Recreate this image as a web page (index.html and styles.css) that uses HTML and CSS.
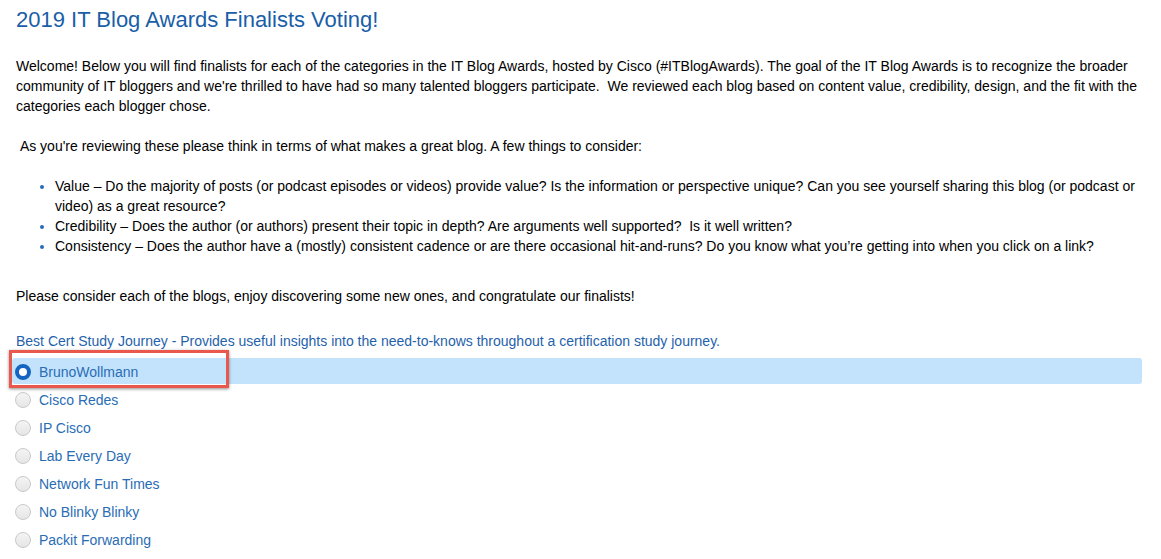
FILE: index.html
```html
<!DOCTYPE html>
<html>
<head>
<meta charset="utf-8">
<link rel="stylesheet" href="styles.css">
</head>
<body>
<div class="page">
  <h1 class="title">2019 IT Blog Awards Finalists Voting!</h1>
  <p class="intro">Welcome! Below you will find finalists for each of the categories in the IT Blog Awards, hosted by Cisco (#ITBlogAwards). The goal of the IT Blog Awards is to recognize the broader community of IT bloggers and we're thrilled to have had so many talented bloggers participate.&nbsp; We reviewed each blog based on content value, credibility, design, and the fit with the categories each blogger chose.</p>
  <p class="consider">&nbsp;As you're reviewing these please think in terms of what makes a great blog. A few things to consider:</p>
  <ul class="points">
    <li>Value – Do the majority of posts (or podcast episodes or videos) provide value? Is the information or perspective unique? Can you see yourself sharing this blog (or podcast or video) as a great resource?</li>
    <li>Credibility – Does the author (or authors) present their topic in depth? Are arguments well supported?&nbsp; Is it well written?</li>
    <li>Consistency – Does the author have a (mostly) consistent cadence or are there occasional hit-and-runs? Do you know what you’re getting into when you click on a link?</li>
  </ul>
  <p class="please">Please consider each of the blogs, enjoy discovering some new ones, and congratulate our finalists!</p>
  <div class="category">Best Cert Study Journey - Provides useful insights into the need-to-knows throughout a certification study journey.</div>
  <div class="options">
    <label class="option selected"><span class="radio"></span><span class="label">BrunoWollmann</span><span class="callout"></span></label>
    <label class="option"><span class="radio"></span><span class="label">Cisco Redes</span></label>
    <label class="option"><span class="radio"></span><span class="label">IP Cisco</span></label>
    <label class="option"><span class="radio"></span><span class="label">Lab Every Day</span></label>
    <label class="option"><span class="radio"></span><span class="label">Network Fun Times</span></label>
    <label class="option"><span class="radio"></span><span class="label">No Blinky Blinky</span></label>
    <label class="option"><span class="radio"></span><span class="label">Packit Forwarding</span></label>
  </div>
</div>
</body>
</html>
```

FILE: styles.css
```css
html, body {
  margin: 0;
  padding: 0;
  background: #fff;
}
body {
  font-family: "Liberation Sans", Arial, sans-serif;
  font-size: 14px;
  line-height: 20px;
  color: #000;
  overflow: hidden;
}
.page {
  width: 1126px;
  padding: 7px 16px 0 16px;
}
.title {
  margin: 0 0 23px 0;
  font-size: 22px;
  line-height: 26px;
  font-weight: normal;
  color: #1a5ea8;
}
p {
  margin: 0;
}
.intro {
  margin-bottom: 20px;
}
.consider {
  margin-bottom: 20px;
}
.points {
  margin: 0 0 30px 0;
  padding-left: 39px;
}
.points li::marker {
  color: #2a6db5;
}
.please {
  margin-bottom: 25px;
}
.category {
  color: #1f62ab;
  margin-bottom: 7px;
}
.options {
  display: flex;
  flex-direction: column;
  gap: 2px;
  margin-left: -4px;
}
.option {
  position: relative;
  display: flex;
  align-items: center;
  gap: 8px;
  height: 26px;
  padding-left: 4px;
  padding-top: 1px;
  box-sizing: border-box;
  border-radius: 3px;
  color: #2a6db5;
}
.option.selected {
  background: #c3e3fd;
}
.radio {
  box-sizing: border-box;
  width: 16px;
  height: 16px;
  border-radius: 50%;
  background: linear-gradient(#f4f4f4, #e6e6e6);
  border: 1px solid #c9c9c9;
  flex: none;
  margin-left: -1px;
}
.selected .radio {
  background: #fff;
  border: 4px solid #1565c0;
}
.callout {
  position: absolute;
  left: -3px;
  top: -8px;
  width: 220px;
  height: 38px;
  box-sizing: border-box;
  border: 3px solid #e9574d;
  box-shadow: 0 1px 3px rgba(0,0,0,0.45);
}
```
